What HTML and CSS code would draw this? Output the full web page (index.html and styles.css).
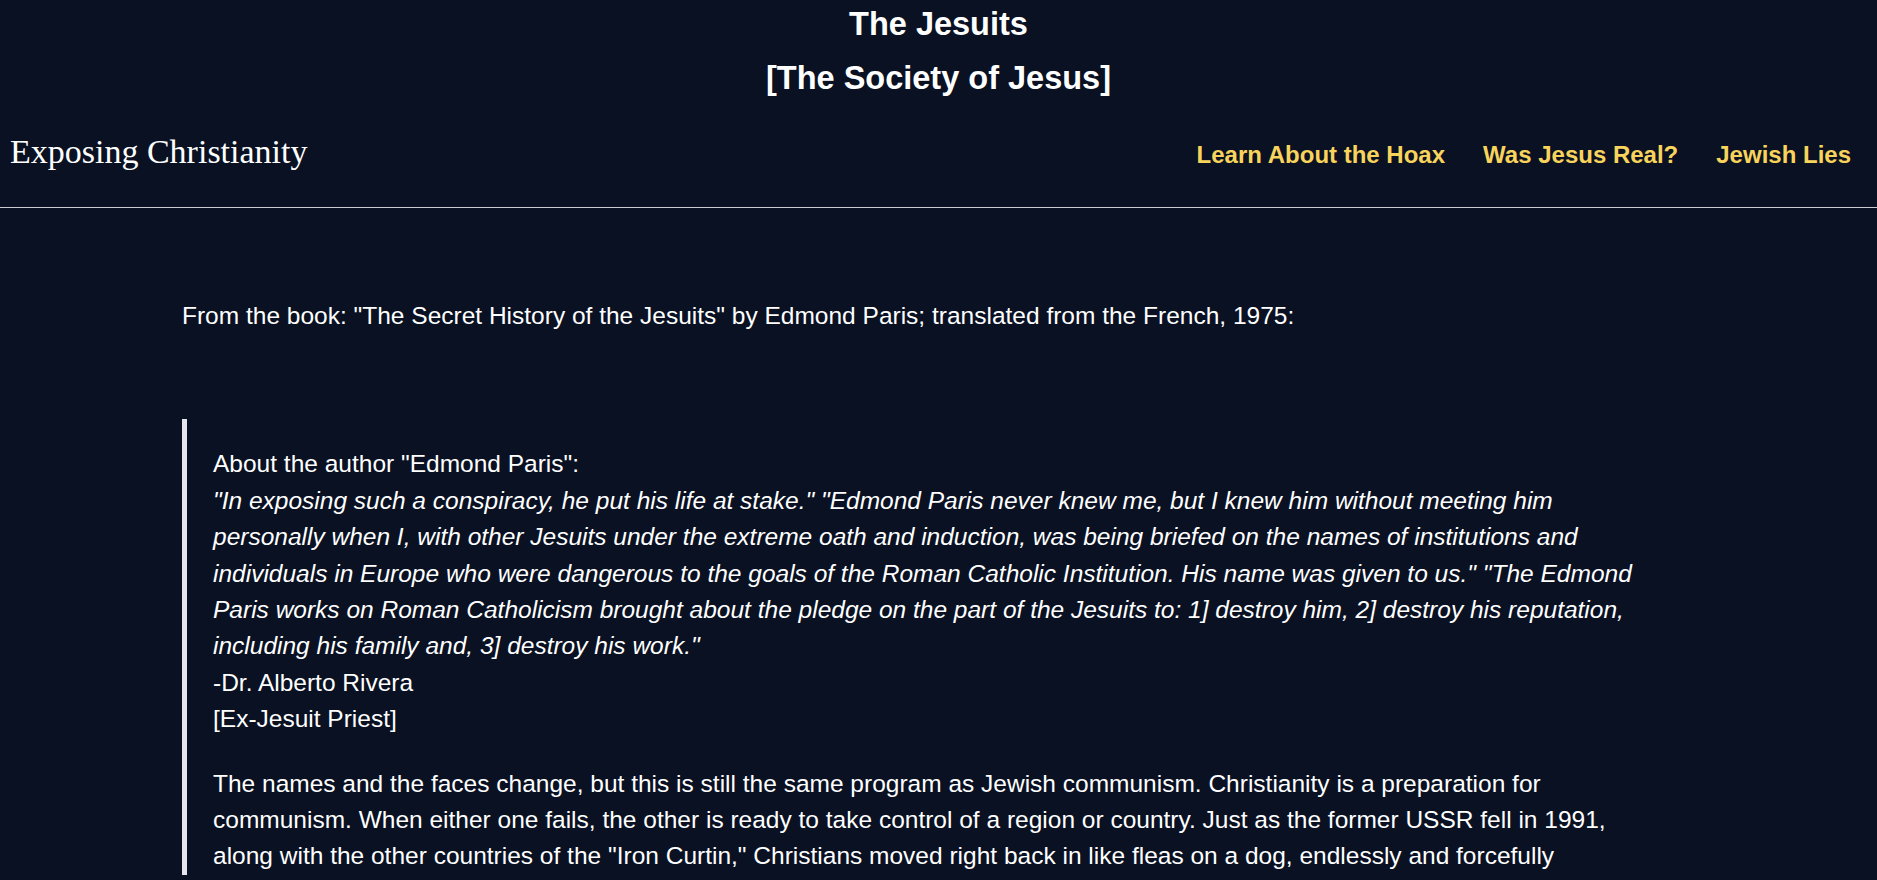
FILE: index.html
```html
<!DOCTYPE html>
<html lang="en">
<head>
<meta charset="utf-8">
<title>The Jesuits [The Society of Jesus]</title>
<link rel="stylesheet" href="styles.css">
</head>
<body>
<header class="site-header">
  <h1 class="page-title">
    <span class="title-line">The Jesuits</span>
    <span class="title-line">[The Society of Jesus]</span>
  </h1>
  <nav class="navbar">
    <a class="brand" href="#">Exposing Christianity</a>
    <ul class="nav-links">
      <li><a href="#">Learn About the Hoax</a></li>
      <li><a href="#">Was Jesus Real?</a></li>
      <li><a href="#">Jewish Lies</a></li>
    </ul>
  </nav>
</header>
<main class="content">
  <p class="intro">From the book: "The Secret History of the Jesuits" by Edmond Paris; translated from the French, 1975:</p>
  <blockquote class="quote">
    <p>About the author "Edmond Paris":<br>
    <em>"In exposing such a conspiracy, he put his life at stake." "Edmond Paris never knew me, but I knew him without meeting him personally when I, with other Jesuits under the extreme oath and induction, was being briefed on the names of institutions and individuals in Europe who were dangerous to the goals of the Roman Catholic Institution. His name was given to us." "The Edmond Paris works on Roman Catholicism brought about the pledge on the part of the Jesuits to: 1] destroy him, 2] destroy his reputation, including his family and, 3] destroy his work."</em><br>
    -Dr. Alberto Rivera<br>
    [Ex-Jesuit Priest]</p>
    <p>The names and the faces change, but this is still the same program as Jewish communism. Christianity is a preparation for communism. When either one fails, the other is ready to take control of a region or country. Just as the former USSR fell in 1991, along with the other countries of the "Iron Curtin," Christians moved right back in like fleas on a dog, endlessly and forcefully</p>
  </blockquote>
</main>
</body>
</html>
```
FILE: styles.css
```css
html, body {
  margin: 0;
  padding: 0;
  background: #091122;
  color: #ffffff;
  font-family: "Liberation Sans", Arial, sans-serif;
}

.site-header {
  border-bottom: 1px solid #c9cbd0;
}

.page-title {
  margin: 0;
  padding-top: 4px;
  display: flex;
  flex-direction: column;
  align-items: center;
  gap: 14px;
  font-size: 32.5px;
  font-weight: 700;
  line-height: 40px;
}

.title-line {
  display: block;
}

.navbar {
  display: flex;
  justify-content: space-between;
  align-items: baseline;
  margin-top: 34px;
  padding: 0 26px 32px 10px;
}

.brand {
  font-family: "Liberation Serif", "Times New Roman", serif;
  font-size: 34px;
  line-height: 40px;
  color: #ffffff;
  text-decoration: none;
}

.nav-links {
  display: flex;
  gap: 38px;
  list-style: none;
  margin: 0;
  padding: 0;
}

.nav-links a {
  font-size: 24px;
  font-weight: 700;
  line-height: 40px;
  color: #f9d45c;
  text-decoration: none;
}

.content {
  padding: 90px 182px 0;
  font-size: 24.5px;
  line-height: 36.4px;
}

.intro {
  margin: 0;
}

.quote {
  margin: 85px 0 0;
  padding: 27px 40px 0 26px;
  border-left: 5px solid #e4e6ec;
}

.quote p {
  margin: 0 0 28px;
}
```
